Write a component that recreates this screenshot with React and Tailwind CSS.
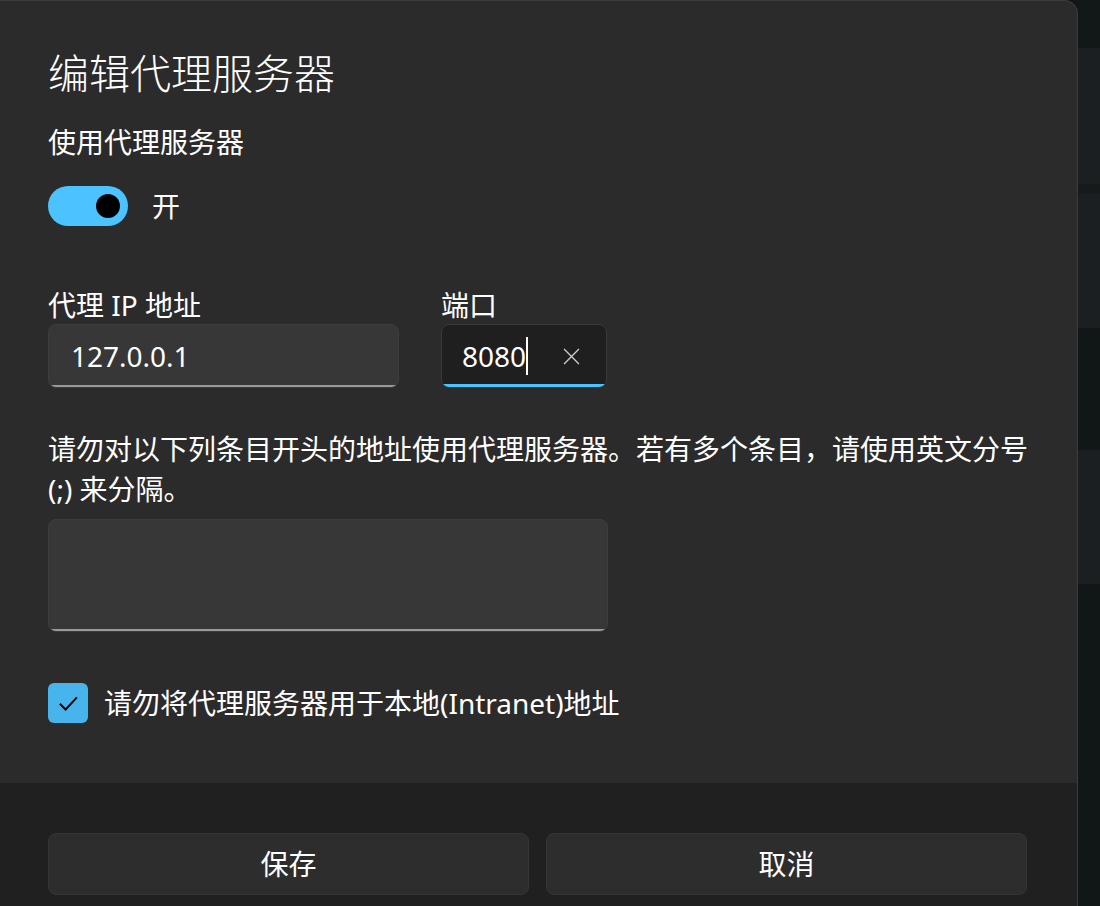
import { useState } from 'react';

const FONT = { fontFamily: '"Segoe UI", "Noto Sans", "Noto Sans CJK SC", sans-serif' };

// the strip of app window peeking out behind the dialog
const BACKDROP = [
  { h: 48, c: 'bg-[#121718]' },
  { h: 136, c: 'bg-[#1c1f21]' },
  { h: 10, c: 'bg-[#151a1b]' },
  { h: 134, c: 'bg-[#1c1f21]' },
  { h: 122, c: 'bg-[#111617]' },
  { h: 134, c: 'bg-[#1c1f21]' },
  { h: 322, c: 'bg-[#111617]' },
];

function Toggle({ on, onChange }) {
  return (
    <div className="flex items-center gap-6 h-10">
      <button onClick={() => onChange(!on)}
        className={`w-20 h-10 rounded-full flex items-center px-2 ${on ? 'bg-[#4cc2ff] justify-end' : 'border-2 border-[#cfcfcf] justify-start'}`}>
        <span className={`w-6 h-6 rounded-full ${on ? 'bg-black' : 'bg-[#cfcfcf]'}`} />
      </button>
      <span className="text-[28px] text-white leading-10">{on ? '开' : '关'}</span>
    </div>
  );
}

function Field({ label, width, children, focused }) {
  return (
    <div className="flex flex-col" style={{ width }}>
      <div className="text-[28px] leading-[38px] text-white whitespace-nowrap">{label}</div>
      <div className={`relative h-[64px] rounded-lg border overflow-hidden flex items-center ${
        focused ? 'bg-[#1f1f1f] border-[#3a3a3a]' : 'bg-[#373737] border-[#3d3d3d]'}`}>
        {children}
        <div className={`absolute left-0 right-0 bottom-0 ${focused ? 'h-[3px] bg-[#4cc2ff]' : 'h-[2px] bg-[#9a9a9a]'}`} />
      </div>
    </div>
  );
}

export default function App() {
  const [enabled, setEnabled] = useState(true);
  const [bypassLocal, setBypassLocal] = useState(true);

  return (
    <div className="w-[1100px] h-[906px] flex bg-[#111617] overflow-hidden" style={FONT}>
      <div className="w-[1078px] h-full flex flex-col bg-[#2b2b2b] border-r border-t border-[#3c3c3c] rounded-tr-[14px] overflow-hidden">
        <div className="flex-1 pl-12 pt-[44px]">
          <h1 className="text-[41px] leading-[56px] text-white font-light">编辑代理服务器</h1>
          <div className="mt-[21px] text-[28px] leading-10 text-white">使用代理服务器</div>
          <div className="mt-6">
            <Toggle on={enabled} onChange={setEnabled} />
          </div>

          <div className="mt-[60px] flex gap-[42px]">
            <Field label="代理 IP 地址" width={351}>
              <span className="pl-[22px] text-[28px] text-white">127.0.0.1</span>
            </Field>
            <Field label="端口" width={166} focused>
              <span className="pl-[20px] text-[28px] text-white">8080</span>
              <span className="w-[2px] h-[38px] bg-white" />
              <svg className="ml-auto mr-[26px]" width="17" height="17" viewBox="0 0 16 16" fill="none" stroke="#d0d0d0" strokeWidth="1.2">
                <path d="M1 1 L15 15 M15 1 L1 15" />
              </svg>
            </Field>
          </div>

          <p className="mt-[41px] text-[28px] leading-10 text-white">
            请勿对以下列条目开头的地址使用代理服务器。若有多个条目，请使用英文分号
            <br />
            (;) 来分隔。
          </p>
          <div className="mt-[10px] relative w-[560px] h-[113px] rounded-lg bg-[#373737] border border-[#3d3d3d] overflow-hidden">
            <div className="absolute left-0 right-0 bottom-0 h-[2px] bg-[#9a9a9a]" />
          </div>

          <label className="mt-[51px] flex items-center gap-4 h-10 cursor-pointer" onClick={() => setBypassLocal(!bypassLocal)}>
            <span className={`w-10 h-10 rounded-md flex items-center justify-center ${bypassLocal ? 'bg-[#47b4ec]' : 'border-2 border-[#9a9a9a]'}`}>
              {bypassLocal && (
                <svg width="26" height="26" viewBox="0 0 16 16" fill="none" stroke="#000" strokeWidth="1.2">
                  <path d="M3 8.5 L6.5 12 L13.5 4.5" />
                </svg>
              )}
            </span>
            <span className="text-[28px] leading-10 text-white">请勿将代理服务器用于本地(Intranet)地址</span>
          </label>
        </div>

        <div className="h-[123px] bg-[#202020] pl-12 pr-12 pt-[50px] flex gap-[17px]">
          <button className="w-[481px] h-[62px] rounded-lg bg-[#2d2d2d] border border-[#353535] text-[28px] text-white">保存</button>
          <button className="w-[481px] h-[62px] rounded-lg bg-[#2d2d2d] border border-[#353535] text-[28px] text-white">取消</button>
        </div>
      </div>

      <div className="flex-1 flex flex-col">
        {BACKDROP.map((b, i) => (
          <div key={i} className={b.c} style={{ height: b.h }} />
        ))}
      </div>
    </div>
  );
}
